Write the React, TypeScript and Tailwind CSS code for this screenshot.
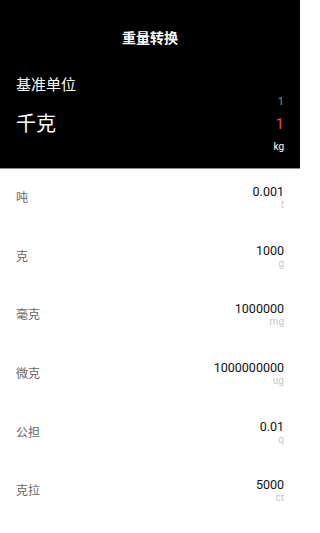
const UNITS = [
  { name: '吨', value: '0.001', symbol: 't' },
  { name: '克', value: '1000', symbol: 'g' },
  { name: '毫克', value: '1000000', symbol: 'mg' },
  { name: '微克', value: '1000000000', symbol: 'ug' },
  { name: '公担', value: '0.01', symbol: 'q' },
  { name: '克拉', value: '5000', symbol: 'ct' },
]

export default function App() {
  return (
    <div className="w-[300px] min-h-[533px] bg-white font-['Roboto','Noto_Sans_CJK_SC',sans-serif]">
      <header className="bg-black text-white px-4 border-b border-[#8a8a8a]">
        <div className="h-[76px] flex items-center justify-center text-[14px] font-bold">重量转换</div>
        <div className="h-[18px] leading-[18px] text-[15px]">基准单位</div>
        <div className="h-[16px] leading-[16px] text-[11px] text-right text-[#8c8c8c]">1</div>
        <div className="h-[29px] flex items-center justify-between">
          <span className="text-[20px] leading-[29px]">千克</span>
          <span className="text-[15px] leading-[29px] text-[#f0482a]">1</span>
        </div>
        <div className="h-[16px] leading-[16px] text-[10px] text-right">kg</div>
        <div className="h-[13px]" />
      </header>
      <ul>
        {UNITS.map(u => (
          <li key={u.symbol} className="h-[58.6px] flex items-center justify-between px-4">
            <span className="text-[12px] text-[#666]">{u.name}</span>
            <div className="flex flex-col items-end">
              <span className="text-[12.5px] leading-[14px] text-[#111]">{u.value}</span>
              <span className="text-[10px] leading-[12px] text-[#c8c8c8]">{u.symbol}</span>
            </div>
          </li>
        ))}
      </ul>
    </div>
  )
}
